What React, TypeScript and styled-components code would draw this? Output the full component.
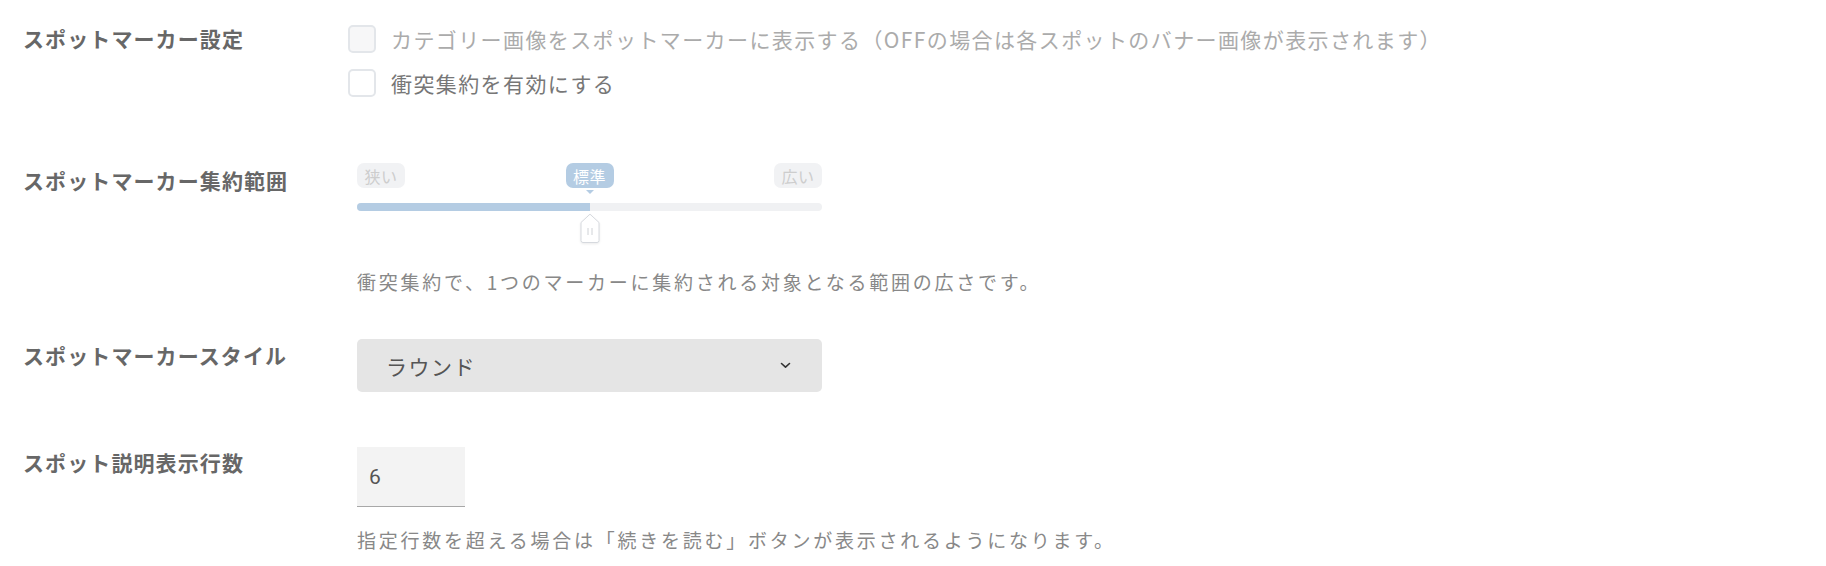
import React from "react";
import styled, { createGlobalStyle } from "styled-components";

const GlobalStyle = createGlobalStyle`
  html, body { margin: 0; padding: 0; background: #ffffff; }
  body {
    font-family: "Noto Sans CJK JP", "Noto Sans", sans-serif;
    -webkit-font-smoothing: antialiased;
  }
`;

const Page = styled.div`
  padding: 24px 0 0 23px;
  display: flex;
  flex-direction: column;
`;

const Row = styled.div<{ $top: number }>`
  display: grid;
  grid-template-columns: 334px 465px;
  align-items: start;
  margin-top: ${(p) => p.$top}px;
`;

const Label = styled.div<{ $offset: number }>`
  margin-top: ${(p) => p.$offset}px;
  font-size: 21px;
  line-height: 28px;
  font-weight: 700;
  letter-spacing: 1.1px;
  color: #676767;
  white-space: nowrap;
`;

const Content = styled.div`
  display: flex;
  flex-direction: column;
  align-items: flex-start;
`;

const CheckList = styled.div`
  display: flex;
  flex-direction: column;
  gap: 16px;
  margin-left: -9px;
  margin-top: 1px;
`;

const CheckItem = styled.label<{ $disabled?: boolean }>`
  display: flex;
  align-items: center;
  gap: 15px;
  font-size: 21px;
  line-height: 28px;
  letter-spacing: 1.4px;
  color: ${(p) => (p.$disabled ? "#ababab" : "#777777")};
  white-space: nowrap;
`;

const Box = styled.span<{ $disabled?: boolean }>`
  width: 28px;
  height: 28px;
  box-sizing: border-box;
  border: 2px solid #e3e6ea;
  border-radius: 5px;
  background: ${(p) => (p.$disabled ? "#f7f7f8" : "#ffffff")};
  flex: none;
`;

const Slider = styled.div`
  width: 465px;
  display: flex;
  flex-direction: column;
`;

const Ticks = styled.div`
  display: flex;
  justify-content: space-between;
  align-items: center;
  height: 25px;
`;

const Pill = styled.span<{ $active?: boolean }>`
  position: relative;
  height: 25px;
  width: 48px;
  box-sizing: border-box;
  display: flex;
  align-items: center;
  justify-content: center;
  border-radius: 7px;
  font-size: 16px;
  letter-spacing: 0.5px;
  background: ${(p) => (p.$active ? "#b4cce3" : "#f1f2f4")};
  color: ${(p) => (p.$active ? "#ffffff" : "#cdcdcd")};
`;

const PillArrow = styled.span`
  position: absolute;
  left: 50%;
  bottom: -6px;
  transform: translateX(-50%);
  width: 0;
  height: 0;
  border-left: 4px solid transparent;
  border-right: 4px solid transparent;
  border-top: 4px solid #b4cce3;
`;

const Track = styled.div`
  position: relative;
  margin-top: 15px;
  height: 8px;
  border-radius: 4px;
  background: #f0f1f3;
`;

const Fill = styled.div`
  height: 100%;
  border-radius: 4px 0 0 4px;
  background: #b4cce3;
`;

const Thumb = styled.svg`
  position: absolute;
  top: 10px;
  transform: translateX(-50%);
  filter: drop-shadow(0 1px 1px rgba(0, 0, 0, 0.08));
`;

const Help = styled.p<{ $top: number }>`
  margin: ${(p) => p.$top}px 0 0 0;
  font-size: 19px;
  line-height: 28px;
  letter-spacing: 2.75px;
  color: #888888;
  white-space: nowrap;
`;

const Select = styled.div`
  width: 465px;
  height: 53px;
  box-sizing: border-box;
  display: flex;
  align-items: center;
  justify-content: space-between;
  padding: 0 31px 0 29px;
  background: #e5e5e5;
  border-radius: 5px;
  font-size: 21px;
  letter-spacing: 1.5px;
  color: #555555;
`;

const NumberBox = styled.div`
  width: 108px;
  height: 60px;
  box-sizing: border-box;
  display: flex;
  align-items: center;
  padding-left: 12px;
  background: #f3f3f3;
  border-bottom: 1.5px solid #a8a8a8;
  font-family: "Roboto", "Noto Sans", sans-serif;
  font-size: 21px;
  color: #555555;
`;

const Chevron = () => (
  <svg width="11" height="7" viewBox="0 0 11 7" aria-hidden>
    <path d="M1.5 1.5 L5.5 5.2 L9.5 1.5" fill="none" stroke="#333" strokeWidth="1.6" strokeLinecap="round" strokeLinejoin="round" />
  </svg>
);

const value = 50;

export default function App() {
  return (
    <>
      <GlobalStyle />
      <Page>
        <Row $top={0}>
          <Label $offset={0}>スポットマーカー設定</Label>
          <Content>
            <CheckList>
              <CheckItem $disabled>
                <Box $disabled />
                カテゴリー画像をスポットマーカーに表示する（OFFの場合は各スポットのバナー画像が表示されます）
              </CheckItem>
              <CheckItem>
                <Box />
                衝突集約を有効にする
              </CheckItem>
            </CheckList>
          </Content>
        </Row>

        <Row $top={66}>
          <Label $offset={3}>スポットマーカー集約範囲</Label>
          <Content>
            <Slider>
              <Ticks>
                <Pill>狭い</Pill>
                <Pill $active>
                  標準
                  <PillArrow />
                </Pill>
                <Pill>広い</Pill>
              </Ticks>
              <Track>
                <Fill style={{ width: `${value}%` }} />
                <Thumb width="21" height="31" viewBox="0 0 21 31" style={{ left: `${value}%` }}>
                  <path
                    d="M1.5 9.5 L10.5 1.2 L19.5 9.5 V27.5 a2 2 0 0 1 -2 2 H3.5 a2 2 0 0 1 -2 -2 Z"
                    fill="#ffffff"
                    stroke="#d6d9de"
                    strokeWidth="1"
                  />
                  <path d="M8.5 15 V22 M12.5 15 V22" stroke="#cfd2d6" strokeWidth="1" />
                </Thumb>
              </Track>
            </Slider>
            <Help $top={57}>衝突集約で、1つのマーカーに集約される対象となる範囲の広さです。</Help>
          </Content>
        </Row>

        <Row $top={43}>
          <Label $offset={2}>スポットマーカースタイル</Label>
          <Content>
            <Select>
              <span>ラウンド</span>
              <Chevron />
            </Select>
          </Content>
        </Row>

        <Row $top={55}>
          <Label $offset={1}>スポット説明表示行数</Label>
          <Content>
            <NumberBox>6</NumberBox>
            <Help $top={19}>指定行数を超える場合は「続きを読む」ボタンが表示されるようになります。</Help>
          </Content>
        </Row>
      </Page>
    </>
  );
}
